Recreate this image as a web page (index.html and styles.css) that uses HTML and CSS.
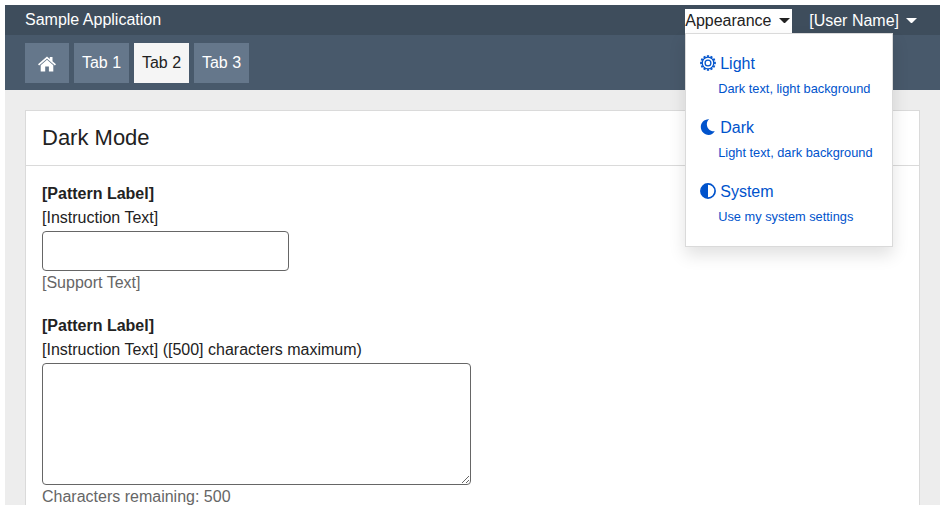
FILE: index.html
```html
<!DOCTYPE html>
<html lang="en">
<head>
<meta charset="utf-8">
<title>Sample Application</title>
<link rel="stylesheet" href="styles.css">
</head>
<body>
<div class="app">
  <header class="topbar">
    <span class="brand">Sample Application</span>
    <div class="appearance">
      <button class="appearance-toggle">Appearance<span class="caret"></span></button>
      <ul class="menu">
        <li class="option">
          <span class="option-title"><svg class="icon" viewBox="0 0 16 16" fill="none" stroke="currentColor"><circle cx="8" cy="8" r="5.8" stroke-width="1.3"/><circle cx="8" cy="8" r="2.9" stroke-width="1.3"/><circle cx="8" cy="8" r="7" stroke-width="1.7" pathLength="24" stroke-dasharray="1.2 0.8" stroke-dashoffset="0.6"/></svg>Light</span>
          <span class="option-note">Dark text, light background</span>
        </li>
        <li class="option">
          <span class="option-title"><svg class="icon" viewBox="0 0 16 16" fill="currentColor"><path d="M9.2.2C7.3 1.5 6.7 3.6 6.9 6c.4 4 3.8 6.8 7.900 6.200C13.200 14.600 11.200 15.900 8.700 15.900 4.300 15.900.8 12.400.8 8S4.300-.1 9.200.2z"/></svg>Dark</span>
          <span class="option-note">Light text, dark background</span>
        </li>
        <li class="option">
          <span class="option-title"><svg class="icon" viewBox="0 0 16 16"><circle cx="8" cy="8" r="7.1" fill="none" stroke="currentColor" stroke-width="1.7"/><path d="M8 1a7 7 0 0 0 0 14z" fill="currentColor"/></svg>System</span>
          <span class="option-note">Use my system settings</span>
        </li>
      </ul>
    </div>
    <button class="user">[User Name]<span class="caret"></span></button>
  </header>
  <nav class="tabs">
    <a class="tab home" aria-label="Home"><svg class="home-icon" viewBox="0 0 18 16" fill="currentColor"><path d="M9 .4 11.800 2.900V1h2.700v4.200L18 8.200l-1.100 1.300L9 2.700 1.100 9.500 0 8.200z"/><path d="M9 3.800 15.300 9.200v6.300h-4.400V10.500H7.200v5H2.700V9.200z"/></svg></a>
    <a class="tab">Tab 1</a>
    <a class="tab active">Tab 2</a>
    <a class="tab">Tab 3</a>
  </nav>
  <main class="card">
    <h1 class="card-title">Dark Mode</h1>
    <div class="card-body">
      <div class="field">
        <label class="label" for="short">[Pattern Label]</label>
        <span class="instruction">[Instruction Text]</span>
        <input class="input" id="short" type="text">
        <span class="support">[Support Text]</span>
      </div>
      <div class="field">
        <label class="label" for="long">[Pattern Label]</label>
        <span class="instruction">[Instruction Text] ([500] characters maximum)</span>
        <textarea class="input area" id="long"></textarea>
        <span class="support">Characters remaining: 500</span>
      </div>
    </div>
  </main>
</div>
</body>
</html>
```

FILE: styles.css
```css
* {
  box-sizing: border-box;
}

body {
  margin: 0;
  padding: 5px 0 0 5px;
  height: 514px;
  overflow: hidden;
  background: #fff;
  color: #222;
  font: 16px/24px "Liberation Sans", Arial, sans-serif;
}

.app {
  height: 500px;
  overflow: hidden;
  background: #ededed;
}

.topbar {
  display: flex;
  align-items: flex-start;
  height: 30px;
  padding: 4px 23px 0 20px;
  background: #3e4d5c;
  color: #fff;
}

.brand {
  margin: -1px auto 0 0;
}

button {
  display: flex;
  align-items: center;
  height: 24px;
  padding: 0;
  border: 0;
  background: none;
  color: inherit;
  font: inherit;
}

.caret {
  width: 11px;
  margin: 0 0 2px 7px;
  border: 5.5px solid transparent;
  border-top-color: currentColor;
  border-bottom: 0;
}

.appearance {
  position: relative;
  margin-right: 17px;
}

.appearance-toggle {
  width: 107px;
  background: #fff;
  color: #222;
}

.menu {
  position: absolute;
  z-index: 2;
  top: 24px;
  left: 0;
  width: 208px;
  height: 214px;
  margin: 0;
  padding: 18px 14px;
  border: 1px solid #dadada;
  background: #fff;
  box-shadow: 0 8px 16px rgba(0, 0, 0, 0.12);
  color: #0053cc;
  list-style: none;
}

.option {
  height: 64px;
  white-space: nowrap;
}

.option-title {
  display: flex;
  align-items: center;
  gap: 4px;
  height: 24px;
}

.icon {
  width: 16px;
  height: 16px;
  margin-bottom: 2px;
}

.option-note {
  display: block;
  padding: 1px 0 0 18px;
  font-size: 12.8px;
}

.tabs {
  display: flex;
  gap: 5px;
  height: 55px;
  padding: 8px 20px 0;
  background: #48596b;
}

.tab {
  width: 55px;
  height: 40px;
  background: #65778b;
  color: #fff;
  line-height: 39px;
  text-align: center;
}

.home {
  display: flex;
  align-items: center;
  justify-content: center;
  width: 44px;
}

.home-icon {
  width: 18px;
  height: 16px;
  margin-top: 2px;
}

.active {
  background: #f5f5f5;
  color: #222;
}

.card {
  height: 500px;
  margin: 20px 20px 0;
  border: 1px solid #dadada;
  background: #fff;
}

.card-title {
  height: 55px;
  margin: 0;
  padding-left: 16px;
  border-bottom: 1px solid #dadada;
  font-size: 22px;
  font-weight: 400;
  line-height: 53px;
}

.card-body {
  padding: 16px;
}

.field {
  margin-bottom: 19px;
}

.label,
.instruction,
.support {
  display: block;
}

.label {
  font-weight: 700;
}

.input {
  display: block;
  width: 247px;
  height: 40px;
  margin-top: 1px;
  border: 1px solid #666;
  border-radius: 4px;
  background: #fff;
}

.area {
  width: 429px;
  height: 122px;
}

.support {
  color: #666;
}
```
